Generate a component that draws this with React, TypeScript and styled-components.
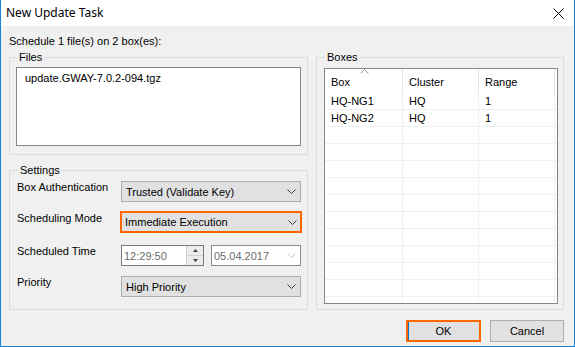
import React from "react";
import styled, { createGlobalStyle } from "styled-components";

const Global = createGlobalStyle`
  html, body { margin: 0; padding: 0; background: #ffffff; }
  #root { width: 575px; height: 347px; }
  *, *::before, *::after { box-sizing: border-box; }
`;

const Window = styled.div`
  width: 575px;
  height: 347px;
  border: 1px solid #1883d7;
  border-top: none;
  display: flex;
  flex-direction: column;
  background: #f0f0f0;
  font-family: "Liberation Sans", Arial, sans-serif;
  font-size: 11px;
  color: #000;
`;

const TitleBar = styled.div`
  height: 26px;
  flex: none;
  background: #ffffff;
  display: flex;
  align-items: center;
  justify-content: space-between;
  padding: 0 10px 0 5px;
`;

const Title = styled.span`
  font-family: "Segoe UI", "Noto Sans", sans-serif;
  font-size: 12px;
  line-height: 16px;
  color: #000;
`;

const CloseIcon = styled.svg`
  display: block;
  width: 11px;
  height: 11px;
`;

const Body = styled.div`
  flex: 1;
  display: flex;
  flex-direction: column;
  padding: 9px 10px 4px 8px;
`;

const Intro = styled.div`
  line-height: 13px;
  margin-bottom: 3px;
`;

const Columns = styled.div`
  display: grid;
  grid-template-columns: 299px 248px;
  column-gap: 8px;
  height: 259px;
`;

const LeftColumn = styled.div`
  display: flex;
  flex-direction: column;
  gap: 9px;
`;

const Group = styled.fieldset<{ $pad: string; $fill?: boolean }>`
  margin: 0;
  min-width: 0;
  border: 1px solid #dcdcdc;
  padding: ${(p) => p.$pad};
  height: ${(p) => (p.$fill ? "100%" : "auto")};
  display: flex;
  flex-direction: column;
`;

const Legend = styled.legend`
  padding: 0 2px;
  margin-left: 1px;
  line-height: 13px;
  font-size: 11px;
`;

const ListBox = styled.div`
  height: 79px;
  background: #ffffff;
  border: 1px solid #828790;
  padding: 4px 8px;
  line-height: 13px;
`;

const SettingsRows = styled.div`
  display: flex;
  flex-direction: column;
  gap: 10px;
`;

const Row = styled.div<{ $mt?: number }>`
  display: grid;
  grid-template-columns: 104px 180px;
  align-items: start;
  height: 21px;
  margin-top: ${(p) => p.$mt ?? 0}px;
`;

const Label = styled.span`
  line-height: 13px;
`;

const Combo = styled.div<{ $highlight?: boolean }>`
  height: ${(p) => (p.$highlight ? "22px" : "21px")};
  margin: ${(p) => (p.$highlight ? "-1px -1px 0 -1px" : "0")};
  border: ${(p) => (p.$highlight ? "2px solid #ff6600" : "1px solid #adadad")};
  background: #e1e1e1;
  display: flex;
  align-items: center;
  justify-content: space-between;
  padding: 0 ${(p) => (p.$highlight ? "3px" : "4px")};
  white-space: nowrap;
`;

const Chevron = styled.svg<{ $disabled?: boolean }>`
  display: block;
  width: 9px;
  height: 5px;
  flex: none;
  color: ${(p) => (p.$disabled ? "#c4c4c4" : "#3c3c3c")};
`;

const TimeGroup = styled.div`
  display: flex;
  gap: 7px;
  height: 21px;
`;

const TimeField = styled.div`
  width: 83px;
  border: 1px solid #7a7a7a;
  background: #ffffff;
  display: flex;
  align-items: center;
  justify-content: space-between;
  color: #6d6d6d;
  padding: 0 0 0 2px;
`;

const Spinner = styled.div`
  width: 17px;
  height: 19px;
  display: flex;
  flex-direction: column;
  border-left: 1px solid #d0d0d0;
  background: #ececec;
`;

const SpinHalf = styled.div<{ $top?: boolean }>`
  flex: 1;
  display: flex;
  align-items: center;
  justify-content: center;
  border-bottom: ${(p) => (p.$top ? "1px solid #d0d0d0" : "none")};
`;

const DateField = styled.div`
  width: 90px;
  border: 1px solid #8c8c8c;
  background: #ffffff;
  display: flex;
  align-items: center;
  justify-content: space-between;
  color: #6d6d6d;
  padding: 0 4px 0 2px;
`;

const ListView = styled.div`
  height: 236px;
  background: #ffffff;
  border: 1px solid #828790;
  overflow: hidden;
  display: flex;
  flex-direction: column;
`;

const HeaderRow = styled.div`
  display: grid;
  grid-template-columns: 78px 76px 76px;
  height: 24px;
  flex: none;
`;

const HeaderCell = styled.div`
  position: relative;
  border-right: 1px solid #e5e5e5;
  padding: 7px 0 0 6px;
  line-height: 13px;
`;

const SortArrow = styled.svg`
  position: absolute;
  left: 35px;
  top: 0px;
  width: 9px;
  height: 5px;
`;

const DataRow = styled.div`
  display: grid;
  grid-template-columns: 78px 76px 76px;
  height: 17px;
  flex: none;
  border-bottom: 1px solid #f0f0f0;
`;

const Cell = styled.div`
  border-right: 1px solid #f0f0f0;
  padding-left: 6px;
  line-height: 16px;
`;

const ButtonRow = styled.div`
  display: flex;
  justify-content: flex-end;
  gap: 9px;
  margin-top: 10px;
`;

const Button = styled.button<{ $default?: boolean }>`
  width: ${(p) => (p.$default ? "75px" : "74px")};
  height: 22px;
  margin: 0;
  padding: 0;
  font-family: "Liberation Sans", Arial, sans-serif;
  font-size: 11px;
  color: #000;
  background: #e1e1e1;
  border: ${(p) => (p.$default ? "2px solid #ff6600" : "1px solid #adadad")};
  box-shadow: ${(p) => (p.$default ? "inset 1px 0 0 #0078d7" : "none")};
`;

const ChevronIcon = ({ disabled }: { disabled?: boolean }) => (
  <Chevron $disabled={disabled} viewBox="0 0 9 5">
    <polyline points="0.5,0.5 4.5,4.5 8.5,0.5" fill="none" stroke="currentColor" strokeWidth="1" />
  </Chevron>
);

const boxes = [
  { box: "HQ-NG1", cluster: "HQ", range: "1" },
  { box: "HQ-NG2", cluster: "HQ", range: "1" },
];

export default function App() {
  const emptyRows = Array.from({ length: 11 });
  return (
    <>
      <Global />
      <Window>
        <TitleBar>
          <Title>New Update Task</Title>
          <CloseIcon viewBox="0 0 11 11">
            <path d="M0.5 0.5 L10.5 10.5 M10.5 0.5 L0.5 10.5" stroke="#000" strokeWidth="1" fill="none" />
          </CloseIcon>
        </TitleBar>
        <Body>
          <Intro>Schedule 1 file(s) on 2 box(es):</Intro>
          <Columns>
            <LeftColumn>
              <Group $pad="3px 6px 8px 6px">
                <Legend>Files</Legend>
                <ListBox>update.GWAY-7.0.2-094.tgz</ListBox>
              </Group>
              <Group $pad="4px 6px 12px 7px">
                <Legend>Settings</Legend>
                <SettingsRows>
                  <Row>
                    <Label>Box Authentication</Label>
                    <Combo>
                      <span>Trusted (Validate Key)</span>
                      <ChevronIcon />
                    </Combo>
                  </Row>
                  <Row>
                    <Label>Scheduling Mode</Label>
                    <Combo $highlight>
                      <span>Immediate Execution</span>
                      <ChevronIcon />
                    </Combo>
                  </Row>
                  <Row $mt={2}>
                    <Label>Scheduled Time</Label>
                    <TimeGroup>
                      <TimeField>
                        <span>12:29:50</span>
                        <Spinner>
                          <SpinHalf $top>
                            <svg width="5" height="3" viewBox="0 0 5 3">
                              <polygon points="0,3 2.5,0 5,3" fill="#404040" />
                            </svg>
                          </SpinHalf>
                          <SpinHalf>
                            <svg width="5" height="3" viewBox="0 0 5 3">
                              <polygon points="0,0 2.5,3 5,0" fill="#404040" />
                            </svg>
                          </SpinHalf>
                        </Spinner>
                      </TimeField>
                      <DateField>
                        <span>05.04.2017</span>
                        <ChevronIcon disabled />
                      </DateField>
                    </TimeGroup>
                  </Row>
                  <Row>
                    <Label>Priority</Label>
                    <Combo>
                      <span>High Priority</span>
                      <ChevronIcon />
                    </Combo>
                  </Row>
                </SettingsRows>
              </Group>
            </LeftColumn>
            <Group $pad="4px 5px 5px 7px" $fill>
              <Legend>Boxes</Legend>
              <ListView>
                <HeaderRow>
                  <HeaderCell>
                    <SortArrow viewBox="0 0 9 5">
                      <polyline points="0.5,4.5 4.5,0.5 8.5,4.5" fill="none" stroke="#9a9a9a" strokeWidth="1" />
                    </SortArrow>
                    Box
                  </HeaderCell>
                  <HeaderCell>Cluster</HeaderCell>
                  <HeaderCell>Range</HeaderCell>
                </HeaderRow>
                {boxes.map((b) => (
                  <DataRow key={b.box}>
                    <Cell>{b.box}</Cell>
                    <Cell>{b.cluster}</Cell>
                    <Cell>{b.range}</Cell>
                  </DataRow>
                ))}
                {emptyRows.map((_, i) => (
                  <DataRow key={i}>
                    <Cell />
                    <Cell />
                    <Cell />
                  </DataRow>
                ))}
              </ListView>
            </Group>
          </Columns>
          <ButtonRow>
            <Button $default>OK</Button>
            <Button>Cancel</Button>
          </ButtonRow>
        </Body>
      </Window>
    </>
  );
}
